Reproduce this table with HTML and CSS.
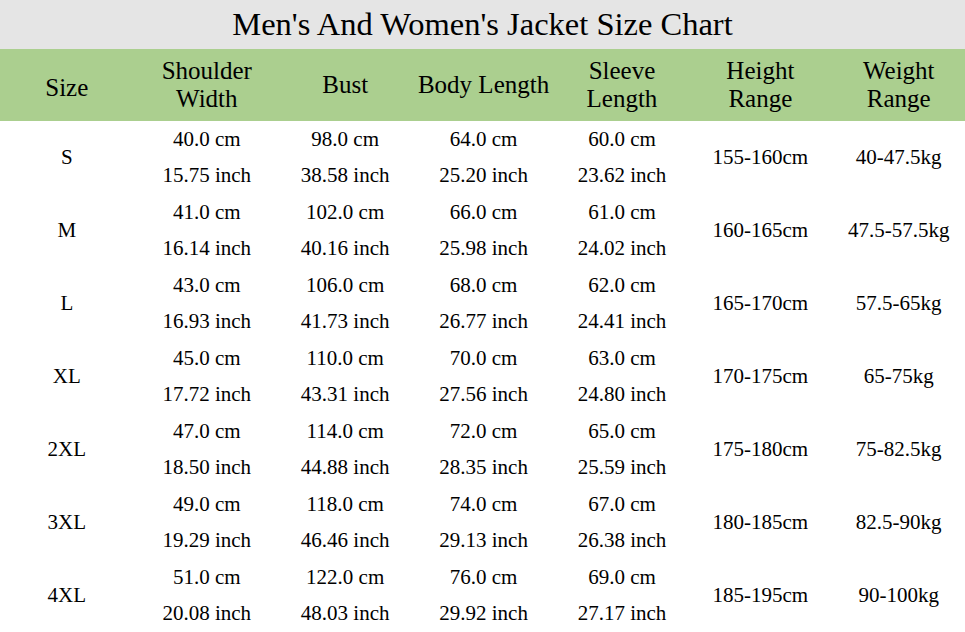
FILE: index.html
```html
<!DOCTYPE html>
<html>
<head>
<meta charset="utf-8">
<link rel="stylesheet" href="styles.css">
</head>
<body>
<div class="chart">
  <div class="title">Men's And Women's Jacket Size Chart</div>
  <div class="head">
    <div class="hcell first size-h">Size</div>
    <div class="hcell">Shoulder<br>Width</div>
    <div class="hcell">Bust</div>
    <div class="hcell">Body Length</div>
    <div class="hcell">Sleeve<br>Length</div>
    <div class="hcell">Height<br>Range</div>
    <div class="hcell">Weight<br>Range</div>
  </div>
  <div class="body">
    <div class="span first">S</div><div class="c">40.0 cm</div><div class="c">98.0 cm</div><div class="c">64.0 cm</div><div class="c">60.0 cm</div><div class="span">155-160cm</div><div class="span">40-47.5kg</div>
    <div class="c">15.75 inch</div><div class="c">38.58 inch</div><div class="c">25.20 inch</div><div class="c">23.62 inch</div>

    <div class="span first">M</div><div class="c">41.0 cm</div><div class="c">102.0 cm</div><div class="c">66.0 cm</div><div class="c">61.0 cm</div><div class="span">160-165cm</div><div class="span">47.5-57.5kg</div>
    <div class="c">16.14 inch</div><div class="c">40.16 inch</div><div class="c">25.98 inch</div><div class="c">24.02 inch</div>

    <div class="span first">L</div><div class="c">43.0 cm</div><div class="c">106.0 cm</div><div class="c">68.0 cm</div><div class="c">62.0 cm</div><div class="span">165-170cm</div><div class="span">57.5-65kg</div>
    <div class="c">16.93 inch</div><div class="c">41.73 inch</div><div class="c">26.77 inch</div><div class="c">24.41 inch</div>

    <div class="span first">XL</div><div class="c">45.0 cm</div><div class="c">110.0 cm</div><div class="c">70.0 cm</div><div class="c">63.0 cm</div><div class="span">170-175cm</div><div class="span">65-75kg</div>
    <div class="c">17.72 inch</div><div class="c">43.31 inch</div><div class="c">27.56 inch</div><div class="c">24.80 inch</div>

    <div class="span first">2XL</div><div class="c">47.0 cm</div><div class="c">114.0 cm</div><div class="c">72.0 cm</div><div class="c">65.0 cm</div><div class="span">175-180cm</div><div class="span">75-82.5kg</div>
    <div class="c">18.50 inch</div><div class="c">44.88 inch</div><div class="c">28.35 inch</div><div class="c">25.59 inch</div>

    <div class="span first">3XL</div><div class="c">49.0 cm</div><div class="c">118.0 cm</div><div class="c">74.0 cm</div><div class="c">67.0 cm</div><div class="span">180-185cm</div><div class="span">82.5-90kg</div>
    <div class="c">19.29 inch</div><div class="c">46.46 inch</div><div class="c">29.13 inch</div><div class="c">26.38 inch</div>

    <div class="span first">4XL</div><div class="c">51.0 cm</div><div class="c">122.0 cm</div><div class="c">76.0 cm</div><div class="c">69.0 cm</div><div class="span">185-195cm</div><div class="span">90-100kg</div>
    <div class="c">20.08 inch</div><div class="c">48.03 inch</div><div class="c">29.92 inch</div><div class="c">27.17 inch</div>
  </div>
</div>
</body>
</html>
```
FILE: styles.css
```css
html, body {
  margin: 0;
  padding: 0;
  background: #ffffff;
  overflow: hidden;
}
.chart {
  width: 965px;
  overflow: hidden;
  font-family: "Liberation Serif", "Times New Roman", serif;
  color: #000;
}
.title {
  width: 965px;
  height: 49px;
  background: #e5e5e5;
  font-size: 32.5px;
  line-height: 49px;
  text-align: center;
}
.head, .body {
  display: grid;
  width: 968px;
  grid-template-columns: 137.6px repeat(6, 138.4px);
}
.head {
  height: 72px;
  background: #abcf8f;
}
.hcell {
  display: flex;
  align-items: center;
  justify-content: center;
  text-align: center;
  font-size: 25px;
  line-height: 28px;
}
.size-h {
  padding-top: 6px;
}
.first {
  padding-right: 4px;
}
.body {
  grid-auto-rows: 36.5px;
  font-size: 21px;
}
.c, .span {
  display: flex;
  align-items: center;
  justify-content: center;
  white-space: nowrap;
}
.span {
  grid-row: span 2;
}
```
